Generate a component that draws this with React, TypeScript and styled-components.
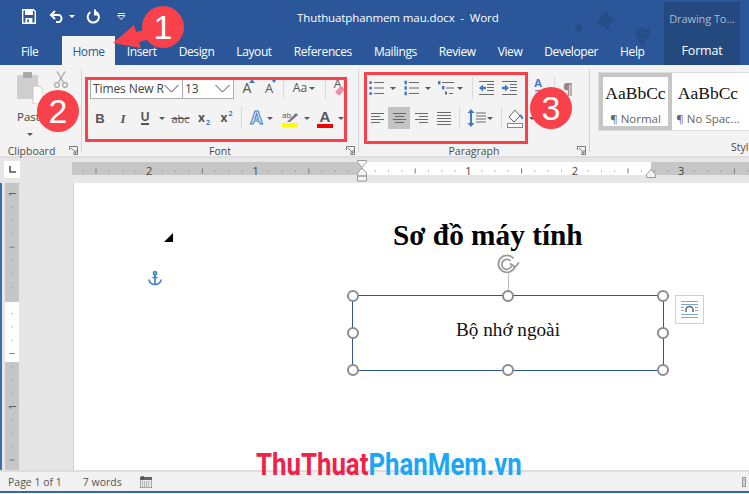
import React from "react";
import styled, { createGlobalStyle } from "styled-components";

const Global = createGlobalStyle`
  html, body { margin: 0; padding: 0; background: #fff; }
  * { box-sizing: border-box; }
  #root { width: 749px; height: 494px; overflow: hidden; }
`;
const UI = `"Open Sans", "Noto Sans", "Liberation Sans", sans-serif`;
const SERIF = `"Liberation Serif", "Times New Roman", serif`;
const BLUE = "#2b579a";
const INK = "#6a6a6a";
const ICON_BLUE = "#3d7cc4";

const Window = styled.div`
  position: relative; width: 749px; height: 494px; display: flex; flex-direction: column;
  overflow: hidden; background: #fff; font-family: ${UI}; color: #444;
`;
const TitleBar = styled.header`
  height: 33px; background: ${BLUE}; display: flex; align-items: center; color: #fff; flex: none;
`;
const Quick = styled.div`display: flex; align-items: center; padding-left: 21px; width: 297px; height: 100%;`;
const QuickSlot = styled.span<{ $w: number; $ml?: number }>`
  display: flex; align-items: center; justify-content: center; width: ${p => p.$w}px; margin-left: ${p => p.$ml ?? 0}px;
`;
const DocTitle = styled.div`font-size: 11.5px; letter-spacing: -0.1px; white-space: pre; margin-top: 2px;`;
const TabBar = styled.nav`height: 32px; background: ${BLUE}; display: flex; align-items: flex-end; padding-left: 10px; flex: none;`;
const Tab = styled.div<{ $active?: boolean }>`
  height: 29px; padding: 1px ${p => (p.$active ? "10px" : "11px")} 0; display: flex; align-items: center; font-size: 12px; letter-spacing: -0.4px;
  color: ${p => (p.$active ? BLUE : "#fff")}; background: ${p => (p.$active ? "#f3f3f3" : "transparent")};
  margin: ${p => (p.$active ? "0 1px 0 13px" : "0")};
`;
const ContextBand = styled.div`
  position: absolute; left: 664px; top: 2px; width: 76px; height: 63px; background: #23497f;
  display: flex; flex-direction: column; align-items: center; color: #fff;
`;
const ContextName = styled.div`font-size: 11px; color: #a9bcd6; margin-top: 9px; height: 24px; letter-spacing: -0.1px;`;
const ContextTab = styled.div`font-size: 12.5px; margin-top: 7px; letter-spacing: -0.2px;`;
const Birds = styled.svg`position: absolute; left: 575px; top: 0; pointer-events: none;`;

const Ribbon = styled.section`height: 93px; background: #f3f3f3; border-bottom: 2px solid #dedede; display: flex; flex: none;`;
const Group = styled.div<{ $w: number; $pl?: number }>`
  width: ${p => p.$w}px; flex: none; padding-left: ${p => p.$pl ?? 0}px; display: flex; flex-direction: column;
`;
const GroupDivider = styled.i`display: block; width: 1px; height: 83px; margin-top: 4px; background: #d4d4d4; flex: none;`;
const GroupBody = styled.div`flex: 1; padding-top: 13px;`;
const Row = styled.div`display: flex; align-items: center; height: 20px;`;
const SecondRow = styled(Row)`height: 22px; margin-top: 9px;`;
const Footer = styled.div<{ $pr?: number; $w?: number }>`
  height: 20px; margin-left: ${p => (p.$w ? -p.$w : 0)}px; display: flex; align-items: center; justify-content: center; position: relative;
  font-size: 10.5px; color: #4a4a4a; padding-right: ${p => p.$pr ?? 0}px; padding-top: 9px;
`;
const Launcher = styled.svg`position: absolute; right: 3px; top: 10px;`;
const Slot = styled.span<{ $w: number; $ml?: number; $on?: boolean }>`
  display: flex; align-items: center; justify-content: center; flex: none; position: relative;
  width: ${p => p.$w}px; margin-left: ${p => p.$ml ?? 0}px; height: 100%;
  background: ${p => (p.$on ? "#c3c3c3" : "transparent")};
  color: ${INK};
`;
const Sep = styled.i<{ $ml: number }>`display: block; flex: none; width: 1px; height: 22px; background: #d9d9d9; margin-left: ${p => p.$ml}px;`;
const Caret = styled.i`display: block; width: 0; height: 0; border: 3px solid transparent; border-top: 3px solid #5a5a5a; border-bottom: 0;`;
const Combo = styled.div<{ $w: number }>`
  width: ${p => p.$w}px; height: 21px; background: #fff; border: 1px solid #ababab; display: flex; align-items: center; justify-content: space-between;
  padding: 0 3px 0 2px; font-size: 12px; color: #444; white-space: nowrap; overflow: hidden; letter-spacing: -0.1px;
  & + & { margin-left: -1px; }
`;
const Glyph = styled.span<{ $s?: number; $c?: string; $b?: boolean; $i?: boolean; $f?: string }>`
  font-family: ${p => p.$f ?? UI}; font-size: ${p => p.$s ?? 12}px; color: ${p => p.$c ?? "#555"};
  font-weight: ${p => (p.$b ? 700 : 400)}; font-style: ${p => (p.$i ? "italic" : "normal")}; line-height: 1;
`;
const Under = styled(Glyph)`border-bottom: 2px solid #555; line-height: 12px;`;
const Strike = styled(Glyph)`text-decoration: line-through;`;
const Script = styled.span<{ $up?: boolean }>`font-size: 7px; color: ${ICON_BLUE}; position: relative; top: ${p => (p.$up ? -6 : 3)}px; font-weight: 700; margin-left: 1px;`;
const Stack = styled.span`display: flex; flex-direction: column; align-items: center; line-height: 1;`;
const ColorBar = styled.i<{ $c: string }>`display: block; width: 16px; height: 4px; background: ${p => p.$c};`;
const OutlineA = styled.span`font: 700 18px "Liberation Sans", sans-serif; color: #e8f1fb; -webkit-text-stroke: 1px ${ICON_BLUE};`;
const Pip = styled.svg<{ $x: number; $y: number }>`position: absolute; left: ${p => p.$x}px; top: ${p => p.$y}px;`;
const RaisedGlyph = styled(Glyph)`margin: -9px 0 0 -3px;`;

const PasteCol = styled.div`display: flex; flex-direction: column; align-items: flex-start; padding-left: 17px; flex: 1;`;
const PasteTop = styled.div`display: flex; align-items: flex-start; margin-top: 7px; height: 32px;`;
const Scissors = styled.svg`margin: -1px 0 0 11px;`;
const PasteLabel = styled.div`font-size: 11.5px; margin-top: 5px; color: #444;`;
const PasteCaret = styled.div`margin: 9px 0 0 10px;`;

const Gallery = styled.div`
  display: flex; margin: 7px 0 0 8px; height: 59px; width: 100%; background: #fff; border-top: 1px solid #dcdcdc; border-bottom: 1px solid #dcdcdc; border-left: 1px solid #dcdcdc;
`;
const StyleCard = styled.div<{ $on?: boolean }>`
  width: ${p => (p.$on ? 73 : 72)}px; flex: none; height: 100%; display: flex; flex-direction: column; align-items: center; padding-top: ${p => (p.$on ? "6px" : "10px")};
  border: ${p => (p.$on ? "4px solid #c6c6c6" : "0")};
`;
const StyleSample = styled.div`font: 17.5px ${SERIF}; color: #111; height: 22px;`;
const StyleName = styled.div`font-size: 11.5px; color: #666; margin-top: 6px; white-space: nowrap;`;
const StyleFooter = styled.div`height: 20px; margin-top: 9px; padding: 0 0 0 141px; font-size: 10.5px; color: #4a4a4a; white-space: nowrap; overflow: hidden;`;

const RulerStrip = styled.div`height: 25px; background: #e6e6e6; display: flex; flex: none; position: relative; padding-left: 4px;`;
const Corner = styled.div`width: 16px; height: 17px; background: #fff; margin-top: 3px; display: flex; align-items: center; justify-content: center;`;
const HRuler = styled.svg`position: absolute; left: 72px; top: 0;`;
const Workspace = styled.div`flex: 1; display: flex; min-height: 0; background: #e6e6e6; border-left: 2px solid #3f6db0;`;
const VRuler = styled.svg`margin-left: 3px; flex: none;`;
const Page = styled.main`
  margin-left: 54px; flex: 1; background: #fff; border-left: 1px solid #cfcfcf; position: relative; padding: 36px 0 0 319px;
`;
const Heading = styled.h1`margin: 0; font: 700 29.3px/32px ${SERIF}; color: #000; white-space: nowrap;`;
const Marker = styled.svg<{ $x: number; $y: number }>`position: absolute; left: ${p => p.$x}px; top: ${p => p.$y}px;`;
const TextBox = styled.div`
  position: relative; width: 312px; height: 76px; margin: 44px 0 0 -41px; border: 1.5px solid #2f5597; padding-bottom: 7px;
  display: flex; align-items: center; justify-content: center; font: 19.2px ${SERIF}; color: #111;
`;
const Handle = styled.i<{ $x: string; $y: string }>`
  position: absolute; left: ${p => p.$x}; top: ${p => p.$y}; width: 12px; height: 12px; margin: -6px 0 0 -6px; background: #fff;
  border: 2px solid #8c8c8c; border-radius: 50%;
`;
const Stem = styled.i`position: absolute; left: 50%; top: -22px; height: 22px; width: 1px; background: #bdbdbd;`;
const Rotate = styled.svg`position: absolute; left: 50%; top: -44px; margin-left: -12px;`;
const LayoutBtn = styled.div`
  position: absolute; right: -41px; top: -1px; width: 29px; height: 29px; background: #fff; border: 1px solid #cfcfcf; display: flex; align-items: center; justify-content: center;
`;
const Status = styled.footer`
  height: 23px; flex: none; background: #f1f1f1; border-top: 2px solid #dedede; border-bottom: 2px solid #3566a8; margin-bottom: 1px; display: flex; align-items: center; padding: 0 3px 0 8px; font-size: 10.5px; color: #555;
`;
const StatusItem = styled.span<{ $ml?: number }>`margin-left: ${p => p.$ml ?? 0}px; display: flex; align-items: center; white-space: nowrap;`;
const StatusEnd = styled.i`display: block; width: 4px; height: 10px; margin-left: auto; background: #cfcfcf; border: 1px solid #9a9a9a;`;
const Watermark = styled.div`
  position: absolute; left: 256px; top: 448px; font: 700 32px/33px Roboto, "Liberation Sans", sans-serif; white-space: nowrap; transform: scaleX(0.807); transform-origin: left top;
`;
const Red = styled.span`color: #ef2347;`;
const Sky = styled.span`color: #1ca6f3;`;
const Frame = styled.div<{ $l: number; $t: number; $w: number; $h: number }>`
  position: absolute; left: ${p => p.$l}px; top: ${p => p.$t}px; width: ${p => p.$w}px; height: ${p => p.$h}px; border: 3px solid #f8414a;
`;
const Badge = styled.div<{ $x: number; $y: number }>`
  position: absolute; left: ${p => p.$x - 21}px; top: ${p => p.$y - 21}px; width: 42px; height: 42px; border-radius: 50%; background: #f8414a; color: #fff;
  font: 400 34px/42px "Liberation Sans", sans-serif; text-align: center;
`;
const Pointer = styled.svg`position: absolute; left: 100px; top: 15px;`;
const WhiteCaret = styled(Caret)`border-top-color: #fff;`;

const Lines = ({ x1 = 0, x2 = 14, ys, w = 15, c = INK }: { x1?: number | number[]; x2?: number | number[]; ys: number[]; w?: number; c?: string }) => (
  <svg width={w} height={16} viewBox={`0 0 ${w} 16`}>
    {ys.map((y, i) => (
      <line key={i} x1={Array.isArray(x1) ? x1[i] : x1} x2={Array.isArray(x2) ? x2[i] : x2} y1={y} y2={y} stroke={c} strokeWidth={1} />
    ))}
  </svg>
);
const Bullets = () => (
  <svg width={15} height={16} viewBox="0 0 15 16">
    {[2.5, 8, 13.5].map(y => <g key={y}><circle cx={1.6} cy={y} r={1.5} fill={ICON_BLUE} /><line x1={5} x2={15} y1={y} y2={y} stroke={INK} /></g>)}
  </svg>
);
const Numbers = () => (
  <svg width={15} height={16} viewBox="0 0 15 16">
    {[2.5, 8, 13.5].map(y => <g key={y}><rect x={0.5} y={y - 1.8} width={2.4} height={3.6} fill={ICON_BLUE} /><line x1={5} x2={15} y1={y} y2={y} stroke={INK} /></g>)}
  </svg>
);
const MultiLevel = () => (
  <svg width={16} height={16} viewBox="0 0 16 16">
    <rect x={0} y={1} width={2.4} height={3.4} fill={ICON_BLUE} /><line x1={4} x2={16} y1={2.5} y2={2.5} stroke={INK} />
    <rect x={4} y={6} width={2.4} height={3.4} fill={ICON_BLUE} /><line x1={8} x2={16} y1={8} y2={8} stroke={INK} />
    <rect x={7} y={11.5} width={2} height={3} fill={INK} /><line x1={11} x2={15} y1={13.5} y2={13.5} stroke={INK} />
  </svg>
);
const Indent = ({ out }: { out?: boolean }) => (
  <svg width={15} height={14} viewBox="0 0 15 14">
    <line x1={0} x2={15} y1={0.5} y2={0.5} stroke={INK} /><line x1={0} x2={15} y1={13.5} y2={13.5} stroke={INK} />
    {[3.5, 6.5, 9.5].map(y => <line key={y} x1={8} x2={15} y1={y} y2={y} stroke={INK} />)}
    <path d={out ? "M0 7l4-3.6v2.4h3v2.4h-3v2.4z" : "M7 7l-4-3.6v2.4h-3v2.4h3v2.4z"} fill={ICON_BLUE} />
  </svg>
);
const Save = () => (
  <svg width={14} height={15} viewBox="0 0 14 15" fill="none">
    <path d="M.7.7h10.8l1.8 1.8v11.8H.7z" stroke="#fff" strokeWidth={1.4} />
    <rect x={3} y={1} width={8} height={5} fill="#fff" />
    <rect x={3.4} y={9} width={7} height={5} fill="#fff" /><rect x={5.2} y={10.4} width={1.6} height={3} fill={BLUE} />
  </svg>
);
const Undo = () => (
  <svg width={16} height={13} viewBox="0 0 16 13" fill="none" stroke="#fff" strokeWidth={2}>
    <path d="M2 5h8.5a4 4 0 0 1 0 7H7" /><path d="M6 1L2 5l4 4" />
  </svg>
);
const Redo = () => (
  <svg width={14} height={15} viewBox="0 0 14 15" fill="none" stroke="#fff" strokeWidth={2}>
    <path d="M4.4 3.2a5.6 5.6 0 1 0 5.4-.2" /><path d="M9 .5v5h4" />
  </svg>
);
const Customize = () => (
  <svg width={9} height={8} viewBox="0 0 9 8" fill="none" stroke="#e5ecf5"><path d="M.5 2.5h7.5L4.3 6.5z" /><line x1="1" x2="8" y1=".5" y2=".5" /></svg>
);
const Chev = () => (
  <svg width={15} height={9} viewBox="0 0 15 9" fill="none" stroke="#444" strokeWidth={1}><path d="M.5 1l7 7 7-7" /></svg>
);
const LaunchIcon = () => (
  <Launcher width={9} height={9} viewBox="0 0 9 9" fill="none" stroke="#777">
    <path d="M.5 4V.5H8.500" /><path d="M8.500.5V8.500H4.500" /><path d="M2 2l5 5M7 4v3H4" />
  </Launcher>
);
const Ruler = () => {
  const items: React.ReactNode[] = [];
  const zero = 290;
  const unit = 106.4 / 8;
  for (let n = -21; n <= 30; n++) {
    const x = zero + n * unit;
    if (x < 2 || x > 677 || n === 0) continue;
    if (n % 8 === 0) {
      items.push(<text key={n} x={x} y={19} textAnchor="middle" fontSize={11} fontFamily="Open Sans, sans-serif" fill="#444">{Math.abs(n / 8)}</text>);
    } else if (n % 4 === 0) {
      items.push(<line key={n} x1={x} x2={x} y1={12.5} y2={17.5} stroke="#777" />);
    } else {
      items.push(<rect key={n} x={x - 0.5} y={14.5} width={1} height={1} fill="#777" />);
    }
  }
  return (
    <HRuler width={677} height={25} viewBox="0 0 677 25">
      <rect x={0} y={4} width={290} height={13} fill="#c6c6c6" />
      <rect x={290} y={4} width={289} height={13} fill="#fff" />
      <rect x={579} y={4} width={98} height={13} fill="#c6c6c6" />
      <g transform="translate(0 -2)">{items}</g>
      <path d="M285.500 2.500h9v2l-4.500 5-4.500-5z M290 10l4.500 5v3h-9v-3z M285.500 18h9v5h-9z" fill="#f5f5f5" stroke="#9a9a9a" />
      <path d="M574.500 16.500l4.500-5 4.500 5v3h-9z" fill="#f5f5f5" stroke="#9a9a9a" />
    </HRuler>
  );
};
const VerticalRuler = () => {
  const marks: React.ReactNode[] = [];
  const unit = 13.3;
  for (let n = 0; n <= 20; n++) {
    const y = 11 + n * unit;
    if (n === 8) continue;
    if (n % 8 === 0) {
      marks.push(<text key={n} x={0} y={0} transform={`translate(7 ${y}) rotate(-90)`} textAnchor="middle" dominantBaseline="central" fontSize={9} fontFamily="Open Sans, sans-serif" fill="#444">1</text>);
    } else if (n % 4 === 0) {
      marks.push(<line key={n} x1={4.500} x2={9.500} y1={y} y2={y} stroke="#777" />);
    } else {
      marks.push(<rect key={n} x={6.500} y={y - 0.5} width={1} height={1} fill="#888" />);
    }
  }
  return (
    <VRuler width={14} height={288} viewBox="0 0 14 288">
      <rect width={14} height={119} fill="#c6c6c6" />
      <rect y={119} width={14} height={60} fill="#fff" />
      <rect y={179} width={14} height={109} fill="#c6c6c6" />
      {marks}
    </VRuler>
  );
};

const corners: [string, string][] = [["0%","0%"],["50%","0%"],["100%","0%"],["0%","50%"],["100%","50%"],["0%","100%"],["50%","100%"],["100%","100%"]];

export default function App() {
  return (
    <Window>
      <Global />
      <TitleBar>
        <Quick>
          <QuickSlot $w={16}><Save /></QuickSlot>
          <QuickSlot $w={16} $ml={12}><Undo /></QuickSlot>
          <QuickSlot $w={8} $ml={3}><WhiteCaret /></QuickSlot>
          <QuickSlot $w={14} $ml={10}><Redo /></QuickSlot>
          <QuickSlot $w={10} $ml={16}><Customize /></QuickSlot>
        </Quick>
        <DocTitle>Thuthuatphanmem mau.docx  -  Word</DocTitle>
      </TitleBar>
      <TabBar>
        <Tab>File</Tab>
        <Tab $active>Home</Tab>
        <Tab>Insert</Tab>
        <Tab>Design</Tab>
        <Tab>Layout</Tab>
        <Tab>References</Tab>
        <Tab>Mailings</Tab>
        <Tab>Review</Tab>
        <Tab>View</Tab>
        <Tab>Developer</Tab>
        <Tab>Help</Tab>
      </TabBar>
      <Birds width={174} height={64} viewBox="0 0 174 64" fill="#234a80" opacity={0.75}>
        <path d="M22 24l6-10 4-3 2 6 8 2-7 4-2 8-5-5z" />
        <path d="M60 34l6-7 5 3 5-4-2 9-4 6-2 6-4-6z" />
        <path d="M-2 25l4 1 4-3 1 6-3 5-4-5z" />
      </Birds>
      <ContextBand>
        <ContextName>Drawing To...</ContextName>
        <ContextTab>Format</ContextTab>
      </ContextBand>

      <Ribbon>
        <Group $w={81}>
          <PasteCol>
            <PasteTop>
              <svg width={26} height={32} viewBox="0 0 26 32">
                <rect x={0} y={3} width={21} height={24} rx={1} fill="#cfcfcf" />
                <rect x={6} y={0} width={9} height={6} rx={1} fill="#a9a9a9" />
                <path d="M16 14h6l4 4v14H16z" fill="#fff" stroke="#c4c4c4" />
              </svg>
              <Scissors width={14} height={17} viewBox="0 0 14 17" fill="none" stroke="#a8a8a8" strokeWidth={1.3}>
                <path d="M3 .5l6.500 11M11 .5L4.500 11.500" /><circle cx={3} cy={14} r={2.4} /><circle cx={11} cy={14} r={2.4} />
              </Scissors>
            </PasteTop>
            <PasteLabel>Paste</PasteLabel>
            <PasteCaret><Caret /></PasteCaret>
          </PasteCol>
          <Footer $pr={18}>Clipboard<LaunchIcon /></Footer>
        </Group>
        <GroupDivider />
        <Group $w={276} $pl={8}>
          <GroupBody>
            <Row>
              <Combo $w={93}>Times New R<Chev /></Combo>
              <Combo $w={52}>13<Chev /></Combo>
              <Slot $w={14} $ml={6}><Glyph $s={14}>A</Glyph><Pip $x={9} $y={1} width={6} height={4} viewBox="0 0 6 4"><path d="M0 4l3-4 3 4z" fill={ICON_BLUE} /></Pip></Slot>
              <Slot $w={14} $ml={8}><Glyph $s={13}>A</Glyph><Pip $x={9} $y={1} width={6} height={4} viewBox="0 0 6 4"><path d="M0 0l3 4 3-4z" fill={ICON_BLUE} /></Pip></Slot>
              <Sep $ml={7} />
              <Slot $w={16} $ml={8}><Glyph $s={12}>Aa</Glyph></Slot>
              <Slot $w={8}><Caret /></Slot>
              <Sep $ml={9} />
              <Slot $w={12} $ml={7}>
                <RaisedGlyph $s={12}>A</RaisedGlyph>
                <Pip $x={2} $y={8} width={10} height={10} viewBox="0 0 10 10"><path d="M0 6l6-6 4 3-5 6H3z" fill="#ee8fa4" /></Pip>
              </Slot>
            </Row>
            <SecondRow>
              <Slot $w={12} $ml={4}><Glyph $b $s={13} $f={`"Liberation Sans", sans-serif`}>B</Glyph></Slot>
              <Slot $w={12} $ml={11}><Glyph $b $i $s={13} $f={`"Liberation Serif", serif`}>I</Glyph></Slot>
              <Slot $w={12} $ml={10}><Under $b $s={12} $f={`"Liberation Sans", sans-serif`}>U</Under></Slot>
              <Slot $w={8} $ml={7}><Caret /></Slot>
              <Slot $w={17} $ml={6}><Strike $s={11}>abc</Strike></Slot>
              <Slot $w={14} $ml={8}><Glyph $b $s={12}>x<Script>2</Script></Glyph></Slot>
              <Slot $w={13} $ml={9}><Glyph $b $s={12}>x<Script $up>2</Script></Glyph></Slot>
              <Sep $ml={8} />
              <Slot $w={13} $ml={8}><OutlineA>A</OutlineA></Slot>
              <Slot $w={8} $ml={3}><Caret /></Slot>
              <Slot $w={16} $ml={8}>
                <Stack>
                  <svg width={16} height={14} viewBox="0 0 16 14">
                    <text x={0} y={8.500} fontSize={8} fill="#555" fontFamily="Open Sans, sans-serif">ab</text>
                    <path d="M5 13l9-9 2 2-8 7z" fill="#777" />
                  </svg>
                  <ColorBar $c="#ffff00" />
                </Stack>
              </Slot>
              <Slot $w={8} $ml={5}><Caret /></Slot>
              <Slot $w={16} $ml={6}>
                <Stack><Glyph $s={15} $b $f={`"Liberation Sans", sans-serif`}>A</Glyph><ColorBar $c="#f00000" /></Stack>
              </Slot>
              <Slot $w={8} $ml={4}><Caret /></Slot>
            </SecondRow>
          </GroupBody>
          <Footer $w={8}>Font<LaunchIcon /></Footer>
        </Group>
        <GroupDivider />
        <Group $w={230} $pl={10}>
          <GroupBody>
            <Row>
              <Slot $w={15}><Bullets /></Slot>
              <Slot $w={8} $ml={5}><Caret /></Slot>
              <Slot $w={15} $ml={7}><Numbers /></Slot>
              <Slot $w={8} $ml={5}><Caret /></Slot>
              <Slot $w={16} $ml={6}><MultiLevel /></Slot>
              <Slot $w={8} $ml={2}><Caret /></Slot>
              <Sep $ml={8} />
              <Slot $w={15} $ml={6}><Indent out /></Slot>
              <Slot $w={15} $ml={8}><Indent /></Slot>
              <Slot $w={12} $ml={15}>
                <Stack><Glyph $s={11} $b $c={ICON_BLUE}>A</Glyph><Glyph $s={11} $b $c="#a35ab5">Z</Glyph></Stack>
              </Slot>
              <Sep $ml={10} />
              <Slot $w={8} $ml={9}><Glyph $s={15} $b $c="#8a8a8a">¶</Glyph></Slot>
            </Row>
            <SecondRow>
              <Slot $w={13} $ml={2}><Lines w={13} x2={[13, 9, 13, 9]} ys={[3.5, 6.5, 9.5, 12.5]} /></Slot>
              <Slot $w={22} $ml={4} $on><Lines w={13} x1={[0, 2, 0, 2]} x2={[13, 11, 13, 11]} ys={[3.5, 6.5, 9.5, 12.5]} /></Slot>
              <Slot $w={13} $ml={5}><Lines w={13} x1={[0, 4, 0, 4]} x2={13} ys={[3.5, 6.5, 9.5, 12.5]} /></Slot>
              <Slot $w={14} $ml={9}><Lines w={14} ys={[2.5, 5.500, 8.500, 11.500, 14.500]} /></Slot>
              <Sep $ml={8} />
              <Slot $w={19} $ml={7}>
                <svg width={19} height={18} viewBox="0 0 19 18">
                  <path d="M4 0l3.500 4H5v10h2.500L4 18 .5 14H3V4H.5z" fill={ICON_BLUE} />
                  {[4, 7, 10, 13].map(y => <line key={y} x1={9} x2={19} y1={y} y2={y} stroke={INK} />)}
                </svg>
              </Slot>
              <Slot $w={8}><Caret /></Slot>
              <Sep $ml={7} />
              <Slot $w={17} $ml={5}>
                <svg width={17} height={19} viewBox="0 0 17 19">
                  <path d="M2 8l6-7 5 6-6 6z" fill="#fff" stroke="#666" />
                  <path d="M13 5c2 1 3.500 3 3 5-1.500.5-3-1-3-5z" fill={ICON_BLUE} />
                  <rect x={.5} y={14.500} width={15} height={4} fill="#fff" stroke="#888" />
                </svg>
              </Slot>
              <Slot $w={8} $ml={4}><Caret /></Slot>
            </SecondRow>
          </GroupBody>
          <Footer $w={10}>Paragraph<LaunchIcon /></Footer>
        </Group>
        <GroupDivider />
        <Group $w={160}>
          <Gallery>
            <StyleCard $on>
              <StyleSample>AaBbCc</StyleSample>
              <StyleName>¶ Normal</StyleName>
            </StyleCard>
            <StyleCard>
              <StyleSample>AaBbCc</StyleSample>
              <StyleName>¶ No Spac...</StyleName>
            </StyleCard>
          </Gallery>
          <StyleFooter>Styles</StyleFooter>
        </Group>
      </Ribbon>

      <RulerStrip>
        <Corner>
          <svg width={7} height={7} viewBox="0 0 7 7"><path d="M1 0v6h6" fill="none" stroke="#555" strokeWidth={1.6} /></svg>
        </Corner>
        <Ruler />
      </RulerStrip>

      <Workspace>
        <VerticalRuler />
        <Page>
          <Marker $x={90} $y={50} width={9} height={9} viewBox="0 0 9 9"><path d="M0 9L9 0v9z" fill="#000" /></Marker>
          <Marker $x={74} $y={88} width={14} height={15} viewBox="0 0 14 15" fill="none" stroke={ICON_BLUE} strokeWidth={1.6}>
            <circle cx={7} cy={2.2} r={1.5} /><path d="M7 4v10M1 8.500c0 3 3 5 6 5s6-2 6-5M4.500 6.500h5" />
          </Marker>
          <Heading>Sơ đồ máy tính</Heading>
          <TextBox>
            <Stem />
            <Rotate width={24} height={24} viewBox="0 0 24 24" fill="none" stroke="#9a9a9a" strokeWidth={1.8}>
              <path d="M17.500 6.500a8.500 8.500 0 1 0 1.500 8" /><path d="M14.500 9a5 5 0 1 0 1 5" /><path d="M14 11.500l5 3.500 4-4.500" />
            </Rotate>
            Bộ nhớ ngoài
            {corners.map(([x, y]) => <Handle key={x + y} $x={x} $y={y} />)}
            <LayoutBtn>
              <svg width={19} height={17} viewBox="0 0 19 17" fill="none" stroke="#7ea8d8">
                {[.5, 3.5, 13.5, 16.5].map(y => <line key={y} x1={1} x2={18} y1={y} y2={y} />)}
                {[6.5, 9.5].map(y => <g key={y}><line x1={1} x2={4} y1={y} y2={y} /><line x1={15} x2={18} y1={y} y2={y} /></g>)}
                <path d="M6 11V9a3.500 3.500 0 0 1 7 0v2" stroke="#666" strokeWidth={1.5} />
              </svg>
            </LayoutBtn>
          </TextBox>
        </Page>
      </Workspace>

      <Status>
        <StatusItem>Page 1 of 1</StatusItem>
        <StatusItem $ml={21}>7 words</StatusItem>
        <StatusItem $ml={18}>
          <svg width={12} height={12} viewBox="0 0 12 12"><rect y={2} width={12} height={10} fill="#e8e8e8" stroke="#666" /><rect width={12} height={3} y={1} fill="#666" /><circle cx={2.500} cy={2} r={2} fill="#555" /><path d="M2 6h8M2 8h8M2 10h8" stroke="#888" strokeDasharray="1 1" /></svg>
        </StatusItem>
        <StatusEnd />
      </Status>

      <Watermark><Red>ThuThuat</Red><Sky>PhanMem.vn</Sky></Watermark>
      <Frame $l={85} $t={77} $w={262} $h={65} />
      <Frame $l={364} $t={72} $w={164} $h={72} />
      <Pointer width={60} height={40} viewBox="100 15 60 40"><path d="M113 43l21-18 2 7 16-4 2 10-15 4 2 6z" fill="#f8414a" /></Pointer>
      <Badge $x={163} $y={27}>1</Badge>
      <Badge $x={58} $y={111}>2</Badge>
      <Badge $x={551} $y={108}>3</Badge>
    </Window>
  );
}
